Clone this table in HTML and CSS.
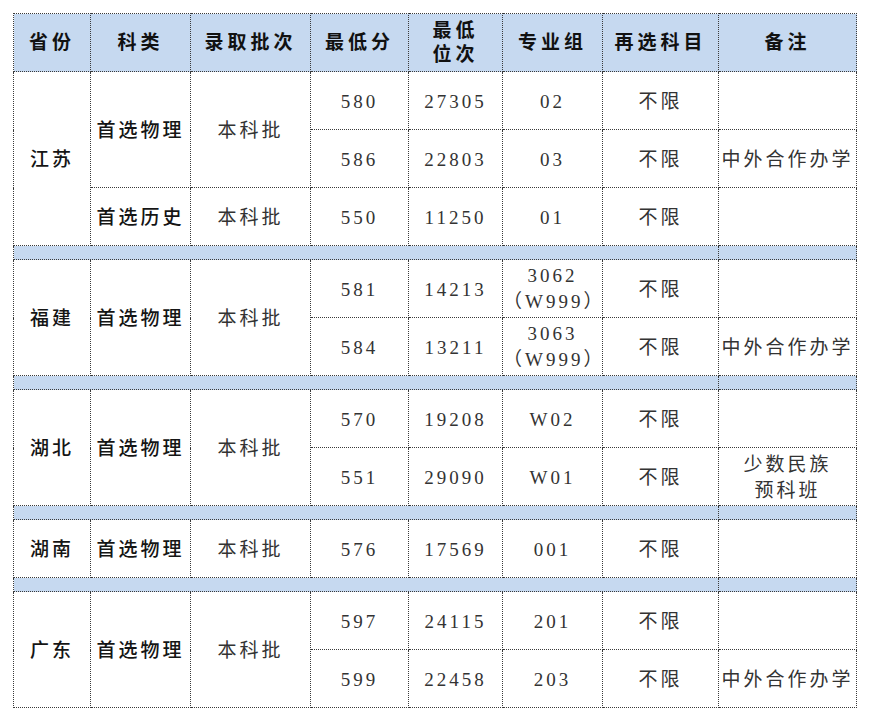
FILE: index.html
```html
<!DOCTYPE html>
<html lang="zh">
<head>
<meta charset="utf-8">
<link rel="stylesheet" href="styles.css">
</head>
<body>
<table class="score">
  <colgroup>
    <col class="c1"><col class="c2"><col class="c3"><col class="c4"><col class="c5"><col class="c6"><col class="c7"><col class="c8">
  </colgroup>
  <thead>
    <tr class="head">
      <th>省份</th><th>科类</th><th>录取批次</th><th>最低分</th><th class="two">最低<br>位次</th><th>专业组</th><th>再选科目</th><th>备注</th>
    </tr>
  </thead>
  <tbody>
    <tr>
      <td rowspan="3" class="prov">江苏</td>
      <td rowspan="2" class="kind">首选物理</td>
      <td rowspan="2">本科批</td>
      <td class="num">580</td><td class="num">27305</td><td class="num">02</td><td>不限</td><td class="note"></td>
    </tr>
    <tr>
      <td class="num">586</td><td class="num">22803</td><td class="num">03</td><td>不限</td><td class="note">中外合作办学</td>
    </tr>
    <tr>
      <td class="kind">首选历史</td><td>本科批</td>
      <td class="num">550</td><td class="num">11250</td><td class="num">01</td><td>不限</td><td class="note"></td>
    </tr>
    <tr class="band"><td colspan="7"></td><td></td></tr>
    <tr>
      <td rowspan="2" class="prov">福建</td>
      <td rowspan="2" class="kind">首选物理</td>
      <td rowspan="2">本科批</td>
      <td class="num">581</td><td class="num">14213</td><td class="num two">3062<br>（W999）</td><td>不限</td><td class="note"></td>
    </tr>
    <tr>
      <td class="num">584</td><td class="num">13211</td><td class="num two">3063<br>（W999）</td><td>不限</td><td class="note">中外合作办学</td>
    </tr>
    <tr class="band"><td colspan="7"></td><td></td></tr>
    <tr>
      <td rowspan="2" class="prov">湖北</td>
      <td rowspan="2" class="kind">首选物理</td>
      <td rowspan="2">本科批</td>
      <td class="num">570</td><td class="num">19208</td><td class="num">W02</td><td>不限</td><td class="note"></td>
    </tr>
    <tr>
      <td class="num">551</td><td class="num">29090</td><td class="num">W01</td><td>不限</td><td class="note two">少数民族<br>预科班</td>
    </tr>
    <tr class="band"><td colspan="7"></td><td></td></tr>
    <tr>
      <td class="prov">湖南</td>
      <td class="kind">首选物理</td>
      <td>本科批</td>
      <td class="num">576</td><td class="num">17569</td><td class="num">001</td><td>不限</td><td class="note"></td>
    </tr>
    <tr class="band"><td colspan="7"></td><td></td></tr>
    <tr>
      <td rowspan="2" class="prov">广东</td>
      <td rowspan="2" class="kind">首选物理</td>
      <td rowspan="2">本科批</td>
      <td class="num">597</td><td class="num">24115</td><td class="num">201</td><td>不限</td><td class="note"></td>
    </tr>
    <tr>
      <td class="num">599</td><td class="num">22458</td><td class="num">203</td><td>不限</td><td class="note">中外合作办学</td>
    </tr>
  </tbody>
</table>
</body>
</html>
```

FILE: styles.css
```css
html, body {
  margin: 0;
  padding: 0;
  background: #ffffff;
}

body {
  padding: 13px 0 0 13px;
  font-family: "Liberation Serif", "Noto Sans CJK SC", serif;
  color: #333333;
}

.score {
  border-collapse: collapse;
  table-layout: fixed;
  width: 843px;
  font-size: 19px;
}

.c1 { width: 77px; }
.c2 { width: 100px; }
.c3 { width: 120px; }
.c4 { width: 98px; }
.c5 { width: 94px; }
.c6 { width: 100px; }
.c7 { width: 116px; }
.c8 { width: 138px; }

.score th,
.score td {
  border: 1px dotted #3a3a3a;
  padding: 2px 0 0 0;
  text-align: center;
  vertical-align: middle;
  letter-spacing: 3px;
  line-height: 24px;
  white-space: nowrap;
}

.score tr {
  height: 58px;
}

.head th {
  background: #c6d9f0;
  color: #111;
  font-weight: 700;
  font-size: 19px;
  letter-spacing: 4px;
  padding-top: 0;
}

.prov,
.kind {
  color: #151515;
  font-weight: 500;
  letter-spacing: 4px;
}

.num {
  letter-spacing: 2px;
}

.num.two {
  line-height: 26px;
  padding-top: 0;
}

.note {
  letter-spacing: 3px;
  padding-left: 3px;
}

.note.two {
  line-height: 26px;
}

.score tr.band {
  height: 14px;
}

.band td {
  background: #c6d9f0;
  height: 13px;
  padding: 0;
  line-height: 0;
  font-size: 0;
}
```
